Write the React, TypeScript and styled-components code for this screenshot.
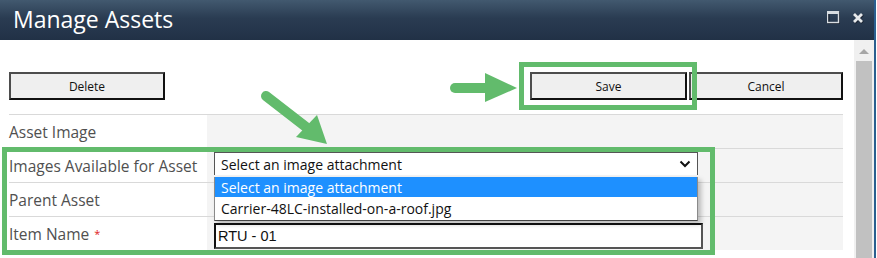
import React from 'react';
import styled, { createGlobalStyle } from 'styled-components';

const Global = createGlobalStyle`
  html, body { margin: 0; padding: 0; background: #fff; overflow: hidden; }
  body { font-family: "Open Sans", "Noto Sans", sans-serif; }
  * { box-sizing: border-box; }
`;

const green = '#62bb6c';

const Frame = styled.div`
  position: relative;
  width: 877px;
  height: 258px;
  padding-right: 1px;
  background: #fff;
`;

const Win = styled.div`
  width: 876px;
  height: 258px;
  border-right: 2px solid #2a5f8f;
  display: flex;
  flex-direction: column;
  overflow: hidden;
`;

const TitleBar = styled.div`
  height: 40px;
  flex: none;
  background: linear-gradient(#42596f, #2a3c52 45%, #213146);
  display: flex;
  align-items: center;
  justify-content: space-between;
  padding: 0 10px 0 13px;
`;

const Title = styled.div`
  color: #fff;
  font-size: 23px;
  line-height: 1;
  margin-top: -1px;
`;

const WinIcons = styled.div`
  display: flex;
  align-items: center;
  gap: 12px;
  margin-top: -5px;
`;

const Body = styled.div`
  flex: 1;
  display: flex;
  min-height: 0;
`;

const Content = styled.div`
  flex: 1;
  padding: 0 11px 0 9px;
  display: flex;
  flex-direction: column;
`;

const Toolbar = styled.div`
  display: flex;
  justify-content: space-between;
  margin-top: 32px;
  margin-bottom: 14px;
`;

const ButtonGroup = styled.div`
  display: flex;
  gap: 2px;
`;

const Btn = styled.button<{ $w: number }>`
  width: ${(p) => p.$w}px;
  height: 28px;
  background: #efefef;
  border: 2px solid;
  border-color: #4d4d4d #111 #111 #4d4d4d;
  font-family: "Open Sans", "Noto Sans", sans-serif;
  font-size: 12px;
  color: #111;
  padding: 0;
  display: flex;
  align-items: center;
  justify-content: center;
`;

const Table = styled.div`
  display: grid;
  grid-template-columns: 198px 1fr;
`;

const LabelCell = styled.div`
  height: 34px;
  border-top: 1px solid #d9d9d9;
  display: flex;
  align-items: center;
  font-size: 15.5px;
  color: #505050;
  background: #fff;
`;

const ValueCell = styled.div`
  height: 34px;
  border-top: 1px solid #d9d9d9;
  background: #f4f4f4;
  display: flex;
  align-items: center;
  padding-left: 7px;
`;

const Required = styled.span`
  color: #e02020;
  font-size: 11px;
  margin-left: 5px;
  align-self: flex-start;
  margin-top: 9px;
`;

const SelectBox = styled.div`
  width: 484px;
  height: 23px;
  margin-top: -4px;
  border: 1px solid #555;
  border-bottom: none;
  background: #fff;
  display: flex;
  align-items: center;
  justify-content: space-between;
  padding: 0 6px 0 6px;
  font-size: 14px;
  color: #111;
`;

const TextInput = styled.div`
  width: 489px;
  height: 26px;
  margin-top: 4px;
  border: 2px solid;
  border-color: #111 #555 #555 #111;
  background: #fff;
  display: flex;
  align-items: center;
  padding-left: 2px;
  font-family: "Liberation Sans", Arial, sans-serif;
  font-size: 14.5px;
  color: #111;
`;

const Scrollbar = styled.div`
  width: 20px;
  flex: none;
  background: #f0f0f0;
  display: flex;
  flex-direction: column;
`;

const ScrollUp = styled.div`
  height: 21px;
  flex: none;
  display: flex;
  align-items: center;
  justify-content: center;
  padding-right: 1px;
`;

const Thumb = styled.div`
  flex: 1;
  margin: 0 2px 0 2px;
  background: #c1c1c1;
`;

const DropList = styled.div`
  position: absolute;
  left: 214px;
  top: 177px;
  width: 484px;
  background: #fff;
  border: 1px solid #8a8a8a;
  border-top: none;
  border-bottom-color: #444;
  box-shadow: 3px 3px 5px rgba(0, 0, 0, 0.25);
  font-size: 14px;
`;

const Option = styled.div<{ $active?: boolean }>`
  height: ${(p) => (p.$active ? 20 : 23)}px;
  display: flex;
  align-items: center;
  padding-left: 6px;
  background: ${(p) => (p.$active ? '#1e90ff' : '#fff')};
  color: ${(p) => (p.$active ? '#fff' : '#111')};
`;

const Highlight = styled.div<{ $x: number; $y: number; $w: number; $h: number }>`
  position: absolute;
  left: ${(p) => p.$x}px;
  top: ${(p) => p.$y}px;
  width: ${(p) => p.$w}px;
  height: ${(p) => p.$h}px;
  border: 5px solid ${green};
  pointer-events: none;
`;

const ArrowSvg = styled.svg`
  position: absolute;
  left: 0;
  top: 0;
  pointer-events: none;
`;

export default function App() {
  return (
    <>
      <Global />
      <Frame>
        <Win>
          <TitleBar>
            <Title>Manage Assets</Title>
            <WinIcons>
              <svg width="13" height="13" viewBox="0 0 13 13">
                <rect x="1" y="1" width="11" height="11" fill="none" stroke="#1a2230" strokeWidth="2" transform="translate(0.5 0.5)" />
                <rect x="0.5" y="0.5" width="11" height="11" fill="none" stroke="#d8dde2" strokeWidth="1.4" />
                <rect x="0.5" y="0.5" width="11" height="2.5" fill="#d8dde2" />
              </svg>
              <svg width="12" height="12" viewBox="0 0 12 12">
                <path d="M2 2 L10 10 M10 2 L2 10" stroke="#1a2230" strokeWidth="3.4" transform="translate(0.6 0.6)" />
                <path d="M2 2 L10 10 M10 2 L2 10" stroke="#e6e9ec" strokeWidth="2.8" />
              </svg>
            </WinIcons>
          </TitleBar>
          <Body>
            <Content>
              <Toolbar>
                <Btn $w={156}>Delete</Btn>
                <ButtonGroup>
                  <Btn $w={157}>Save</Btn>
                  <Btn $w={154}>Cancel</Btn>
                </ButtonGroup>
              </Toolbar>
              <Table>
                <LabelCell>Asset Image</LabelCell>
                <ValueCell />
                <LabelCell>Images Available for Asset</LabelCell>
                <ValueCell>
                  <SelectBox>
                    <span>Select an image attachment</span>
                    <svg width="12" height="8" viewBox="0 0 12 8">
                      <path d="M1.5 1.5 L6 6 L10.5 1.5" fill="none" stroke="#111" strokeWidth="2" />
                    </svg>
                  </SelectBox>
                </ValueCell>
                <LabelCell>Parent Asset</LabelCell>
                <ValueCell />
                <LabelCell>
                  Item Name<Required>*</Required>
                </LabelCell>
                <ValueCell>
                  <TextInput>RTU - 01</TextInput>
                </ValueCell>
              </Table>
            </Content>
            <Scrollbar>
              <ScrollUp>
                <svg width="10" height="6" viewBox="0 0 10 6">
                  <path d="M0 6 L5 1 L10 6 Z" fill="#a6a6a6" />
                </svg>
              </ScrollUp>
              <Thumb />
            </Scrollbar>
          </Body>
        </Win>
        <DropList>
          <Option $active>Select an image attachment</Option>
          <Option>Carrier-48LC-installed-on-a-roof.jpg</Option>
        </DropList>
        <Highlight $x={519} $y={62} $w={178} $h={48} />
        <Highlight $x={2} $y={147} $w={713} $h={108} />
        <ArrowSvg width="877" height="258" viewBox="0 0 877 258">
          <line x1="455" y1="88" x2="490" y2="88" stroke={green} strokeWidth="10" strokeLinecap="round" />
          <path d="M485 73 L517 88 L485 102 Z" fill={green} />
          <line x1="266" y1="96" x2="306" y2="127" stroke={green} strokeWidth="10" strokeLinecap="round" />
          <path d="M296 137 L317 115 L327 144 Z" fill={green} />
        </ArrowSvg>
      </Frame>
    </>
  );
}
